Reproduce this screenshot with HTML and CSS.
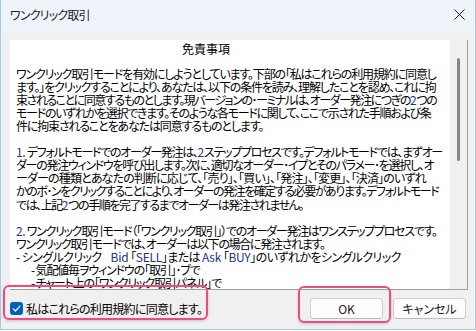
FILE: index.html
```html
<!DOCTYPE html>
<html lang="ja">
  <head>
    <meta charset="UTF-8" />
    <title>ワンクリック取引</title>
    <link rel="stylesheet" href="styles.css">
  </head>
  <body>
    <div class="window">
      <div class="titlebar">
        <span class="title">ワンクリック取引</span>
        <svg class="close" width="11" height="11" viewBox="0 0 11 11">
          <path d="M0.5 0.5 L10.5 10.5 M10.5 0.5 L0.5 10.5" stroke="#1f1f1f" stroke-width="1" fill="none" />
        </svg>
      </div>

      <div class="content">
        <div class="doc">
          <div class="doc-text">
            <h2 class="doc-title">免責事項</h2>
            <p>
              <span class="ln">ワンクリック取引モードを有効にしようとしています。下部の「私はこれらの利用規約に同意し</span>
              <span class="ln">ます。」をクリックすることにより、あなたは、以下の条件を読み、理解したことを認め、これに拘</span>
              <span class="ln tighter">束されることに同意するものとします。現バージョンの･ーミナルは、オーダー発注につぎの<i>2</i>つの</span>
              <span class="ln tight">モードのいずれかを選択できます。そのような各モードに関して、ここで示された手順および条</span>
              <span class="ln">件に拘束されることをあなたは同意するものとします。</span>
            </p>
            <p>
              <span class="ln tight"><i>1.</i> デフォルトモードでのオーダー発注は、<i>2</i>ステッププロセスです。デフォルトモードでは、まずオー</span>
              <span class="ln tight">ダーの発注ウィンドウを呼び出します。次に、適切なオーダー･イプとそのパラメー･を選択し、オ</span>
              <span class="ln loose">ーダーの種類とあなたの判断に応じて、「売り」、「買い」、「発注」、「変更」、「決済」のいずれ</span>
              <span class="ln tighter">かのボ･ンをクリックすることにより、オーダーの発注を確定する必要があります。デフォルトモード</span>
              <span class="ln tighter">では、上記<i>2</i>つの手順を完了するまでオーダーは発注されません。</span>
            </p>
            <p>
              <span class="ln tight"><i>2.</i> ワンクリック取引モード（「ワンクリック取引」）でのオーダー発注はワンステッププロセスです。</span>
              <span class="ln tight">ワンクリック取引モードでは、オーダーは以下の場合に発注されます。</span>
              <span class="ln wide">- シングルクリック<span class="gap"></span><i>Bid</i> 「<i>SELL</i>」または <i>Ask</i> 「<i>BUY</i>」のいずれかをシングルクリック</span>
              <span class="ln sub">- 気配値毎ヲウィンドウの「取引」･ブで</span>
              <span class="ln sub">- チャート上の「ワンクリック取引パネル」で</span>
            </p>
          </div>
          <div class="scrollbar">
            <div class="thumb"></div>
          </div>
        </div>

        <div class="footer">
          <label class="agree">
            <span class="checkbox">
              <svg width="13" height="13" viewBox="0 0 13 13">
                <path d="M3.2 6.8 L5.4 9 L9.9 4.2" stroke="#fff" stroke-width="1.2" fill="none" stroke-linecap="round" stroke-linejoin="round" />
              </svg>
            </span>
            私はこれらの利用規約に同意します。
          </label>
          <div class="buttons">
            <button class="btn">OK</button>
            <button class="btn">キャンセル</button>
          </div>
        </div>
      </div>

      <!-- 注目枠 -->
      <div class="mark mark-agree"></div>
      <div class="mark mark-ok"></div>
    </div>
  </body>
</html>
```

FILE: styles.css
```css
html, body {
  margin: 0;
  padding: 0;
  background: #ffffff;
}
body {
  font-family: "Noto Sans CJK JP", "Noto Sans", sans-serif;
  font-size: 12px;
  color: #000;
  font-feature-settings: "palt";
}
.window {
  position: relative;
  width: 474px;
  height: 329px;
  border: 1px solid #a9c8e8;
  border-top: none;
  background: #f0f0f0;
  display: flex;
  flex-direction: column;
}
.titlebar {
  height: 31px;
  flex: 0 0 31px;
  background: #eef4fa;
  display: flex;
  align-items: center;
  justify-content: space-between;
  padding: 0 9px 2px 9px;
  box-sizing: border-box;
}
.title {
  font-size: 12px;
  color: #1a1a1a;
  letter-spacing: -0.8px;
}
.close {
  margin-right: 1px;
}
.content {
  flex: 1;
  padding: 9px 7px 0 9px;
  display: flex;
  flex-direction: column;
}
.doc {
  display: flex;
  height: 249px;
  flex: 0 0 249px;
  background: #fff;
  border-right: 1px solid #a0a0a0;
  border-bottom: 1px solid #a0a0a0;
}
.doc-text {
  flex: 1;
  overflow: hidden;
  padding: 1.5px 0 0 6px;
  line-height: 13.1px;
  letter-spacing: -1.15px;
}
.doc-title {
  font-size: 12px;
  font-weight: normal;
  margin: 0 0 12px 0;
  padding-left: 166px;
  line-height: 13.1px;
  letter-spacing: 0;
}
.doc-text p {
  margin: 0 0 13.1px 0;
}
.ln {
  display: block;
  white-space: pre;
}
.ln.tight {
  letter-spacing: -1.3px;
}
.ln.tighter {
  letter-spacing: -1.45px;
}
.ln.loose {
  letter-spacing: -0.85px;
}
.ln.wide {
  letter-spacing: -0.6px;
}
.ln .gap {
  display: inline-block;
  width: 9px;
}
.ln.sub {
  padding-left: 15px;
}
.doc-text i {
  font-style: normal;
  color: #233687;
  letter-spacing: -0.3px;
}
.scrollbar {
  width: 17px;
  flex: 0 0 17px;
  background: #f0f0f0;
}
.thumb {
  margin: 18px 0 0 7px;
  width: 3px;
  height: 103px;
  border-radius: 2px;
  background: #858585;
}
.footer {
  height: 36px;
  display: flex;
  align-items: center;
}
.agree {
  display: flex;
  align-items: center;
  gap: 3px;
  font-size: 12px;
  letter-spacing: -0.75px;
}
.checkbox {
  width: 13px;
  height: 13px;
  border-radius: 3px;
  background: #005fb8;
  display: inline-flex;
}
.buttons {
  margin-left: auto;
  display: flex;
  gap: 10px;
  margin-right: 2px;
}
.btn {
  font-family: "Noto Sans CJK JP", "Noto Sans", sans-serif;
  font-feature-settings: "palt";
  font-size: 12px;
  width: 73px;
  height: 21px;
  padding: 0;
  background: #fdfdfd;
  border: 1px solid #d0d0d0;
  border-bottom-color: #bdbdbd;
  border-radius: 4px;
  color: #1a1a1a;
}
.mark {
  position: absolute;
  border: 2px solid #ef4b7f;
  border-radius: 6px;
  box-shadow: 0 1px 3px rgba(0, 0, 0, 0.18);
}
.mark-agree {
  left: 2px;
  top: 285px;
  width: 201px;
  height: 31px;
}
.mark-ok {
  left: 297px;
  top: 286px;
  width: 89px;
  height: 33px;
}
```
